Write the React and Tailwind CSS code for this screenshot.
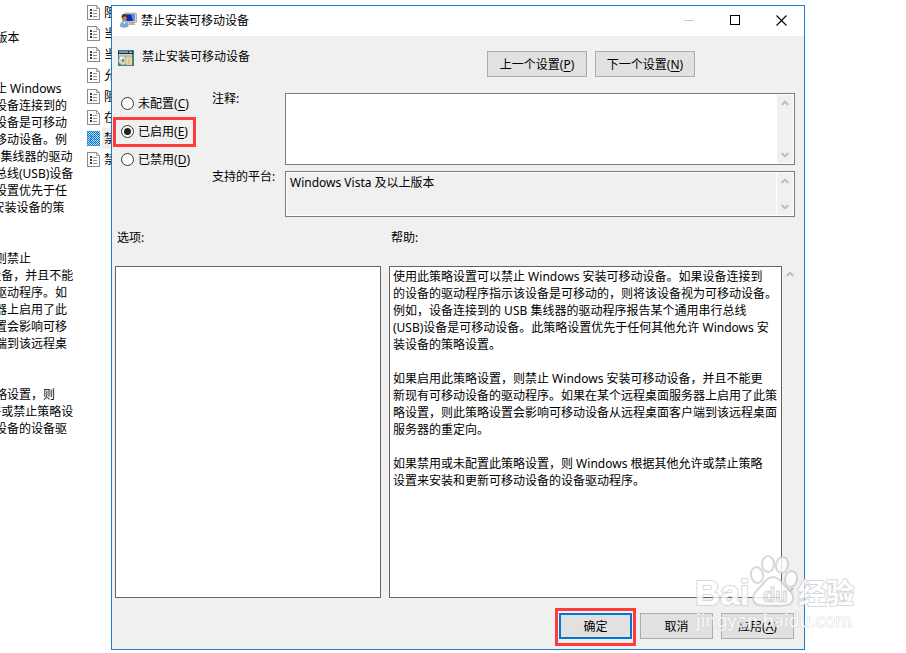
import { useState } from "react";

const POLICY_SUMMARY = [
  "使用此策略设置可以禁止 Windows",
  "安装可移动设备。如果设备连接到的",
  "设备的驱动程序指示该设备是可移动",
  "的，则将该设备视为可移动设备。例",
  "如，设备连接到的 USB 集线器的驱动",
  "程序报告某个通用串行总线(USB)设备",
  "是可移动设备。此策略设置优先于任",
  "何其他允许 Windows 安装设备的策",
  "略设置。",
  "",
  "如果启用此策略设置，则禁止",
  "Windows 安装可移动设备，并且不能",
  "更新现有可移动设备的驱动程序。如",
  "果在某个远程桌面服务器上启用了此",
  "策略设置，则此策略设置会影响可移",
  "动设备从远程桌面客户端到该远程桌",
  "面服务器的重定向。",
  "",
  "如果禁用或未配置此策略设置，则",
  "Windows 根据其他允许或禁止策略设",
  "置来安装和更新可移动设备的设备驱",
];

const POLICIES = ["阻", "当", "当", "允", "阻", "在", "禁", "禁"];
const SELECTED_POLICY = 6;

const HELP_TEXT = `使用此策略设置可以禁止 Windows 安装可移动设备。如果设备连接到
的设备的驱动程序指示该设备是可移动的，则将该设备视为可移动设备。
例如，设备连接到的 USB 集线器的驱动程序报告某个通用串行总线
(USB)设备是可移动设备。此策略设置优先于任何其他允许 Windows 安
装设备的策略设置。

如果启用此策略设置，则禁止 Windows 安装可移动设备，并且不能更
新现有可移动设备的驱动程序。如果在某个远程桌面服务器上启用了此策
略设置，则此策略设置会影响可移动设备从远程桌面客户端到该远程桌面
服务器的重定向。

如果禁用或未配置此策略设置，则 Windows 根据其他允许或禁止策略
设置来安装和更新可移动设备的设备驱动程序。`;

const STATES = [
  { id: "unset", label: "未配置", hotkey: "C" },
  { id: "enabled", label: "已启用", hotkey: "E" },
  { id: "disabled", label: "已禁用", hotkey: "D" },
];

const Mnemonic = ({ text, hotkey }) => (
  <span>
    {text}(<u className="underline-offset-2">{hotkey}</u>)
  </span>
);

const PolicyIcon = ({ selected }) => (
  <svg width="13" height="15" viewBox="0 0 13 15" shapeRendering="crispEdges" className="shrink-0">
    <defs>
      <pattern id="dither" width="2" height="2" patternUnits="userSpaceOnUse">
        <rect width="1" height="1" fill="#0078d7" />
        <rect x="1" y="1" width="1" height="1" fill="#0078d7" />
      </pattern>
    </defs>
    <path d="M.5 .5h9l3 3v11h-12z" fill="#fbfbfb" stroke="#8c8c8c" />
    <path d="M9.5 .5v3h3" fill="none" stroke="#a8a8a8" />
    <path d="M3 4h2v2H3zM3 7h2v2H3zM3 10h2v2H3z" fill="#3c3c48" />
    <path d="M6 5.500h4M6 8.500h4M6 11.500h4" stroke="#8f8f9c" />
    {selected && <rect width="13" height="15" fill="#9fd0f7" fillOpacity="0.6" />}
    {selected && <rect width="13" height="15" fill="url(#dither)" />}
  </svg>
);

const UserMonitorIcon = () => (
  <svg width="17" height="16" viewBox="0 0 17 16" className="shrink-0">
    <rect x="4.5" y="1" width="12" height="9.5" rx="1" fill="#d9d6c8" stroke="#96948a" strokeWidth=".7" />
    <rect x="6" y="2.3" width="9" height="6.8" fill="#1226b4" />
    <path d="M11 2.3h4v6.8h-2z" fill="#5c8dec" />
    <path d="M9 10.5h5l1.5 2.5H8z" fill="#b5b2a6" />
    <path d="M0 14.5c0-4 2-5.5 4-5.5s4.500 1.500 4.500 5.500c-2 1.500-6.500 1.500-8.500 0z" fill="#75a9d8" />
    <path d="M3 9.500l1.300 3 1.500-3z" fill="#f1f5f8" />
    <ellipse cx="4.300" cy="6.300" rx="2.500" ry="3.200" fill="#b98458" />
    <path d="M1.700 6C1 2.500 3 1.500 4.800 2c2 .2 2.500 2 2 4L5.500 4z" fill="#463424" />
  </svg>
);

const SettingIcon = () => (
  <svg width="16" height="16" viewBox="0 0 16 16" className="shrink-0">
    <rect width="16" height="16" fill="#3f7f7b" />
    <rect y="1" width="15" height="3" fill="#17335f" />
    <path d="M1 2h9" stroke="#e9edf2" />
    <rect x="11" y="1.500" width="3" height="1.500" fill="#b8c0ce" />
    <rect x="1" y="4" width="13" height="3" fill="#c6cbc9" />
    <path d="M8 5h5v1H8z" fill="#edc33b" />
    <circle cx="5" cy="10.500" r="4.500" fill="#d5dbd2" stroke="#8d9690" strokeWidth=".6" />
    <path d="M5 10.500L1.500 8A4.500 4.500 0 0 1 4 6.300z" fill="#fff" />
    <circle cx="5" cy="10.500" r="1.200" fill="#4b7068" />
    <path d="M8 7h6v8H8z" fill="#fdf6ce" stroke="#b59a4c" strokeWidth=".7" />
    <path d="M9.500 9h3M9.500 11h3M9.500 13h3" stroke="#927b40" strokeWidth=".8" />
  </svg>
);

const Chevron = ({ down }) => (
  <svg width="8" height="6" viewBox="0 0 8 6" fill="none" stroke="#bfbfbf" strokeWidth="2">
    <path d={down ? "M.7 1L4 4.300 7.300 1" : "M.7 5L4 1.700 7.300 5"} />
  </svg>
);

const ScrollTrack = () => (
  <div className="w-4 shrink-0 flex flex-col items-center justify-between bg-[#f0f0f0] py-[5px]">
    <Chevron />
    <Chevron down />
  </div>
);

const PushButton = ({ className = "", children }) => (
  <button
    type="button"
    className={`h-[26px] flex items-center justify-center bg-[#e1e1e1] border border-[#adadad] ${className}`}
  >
    {children}
  </button>
);

const TitleBar = ({ title }) => (
  <div className="h-[30px] shrink-0 flex items-center bg-white pl-2 pb-0.5">
    <UserMonitorIcon />
    <h1 className="ml-1 flex-1">{title}</h1>
    <button type="button" aria-label="最小化" disabled className="w-[46px] h-full flex items-center justify-center">
      <svg width="10" height="10" stroke="#c8c8c8" shapeRendering="crispEdges">
        <path d="M0 5.500h10" />
      </svg>
    </button>
    <button type="button" aria-label="最大化" className="w-[46px] h-full flex items-center justify-center">
      <svg width="10" height="10" fill="none" stroke="#000" shapeRendering="crispEdges">
        <path d="M.5 .5h9v9h-9z" />
      </svg>
    </button>
    <button type="button" aria-label="关闭" className="w-[46px] h-full flex items-center justify-center">
      <svg width="11" height="11" fill="none" stroke="#000" strokeWidth="1.100">
        <path d="M.5 .5l10 10M10.500 .5l-10 10" />
      </svg>
    </button>
  </div>
);

const StateOptions = () => {
  const [state, setState] = useState("enabled");

  return (
    <fieldset className="w-[97px] shrink-0">
      {STATES.map(({ id, label, hotkey }) => (
        <label key={id} className="relative h-7 flex items-center gap-1 pl-[6px]">
          <input
            type="radio"
            name="state"
            checked={state === id}
            onChange={() => setState(id)}
            className="appearance-none size-[13px] grid place-items-center rounded-full border border-[#333] bg-white before:size-[7px] before:rounded-full checked:before:bg-[#222]"
          />
          <Mnemonic text={label} hotkey={hotkey} />
          {id === "enabled" && (
            <span className="absolute -left-0.5 top-0 w-[83px] h-[30px] border-3 border-[#ff3b3b] pointer-events-none" />
          )}
        </label>
      ))}
    </fieldset>
  );
};

const Watermark = () => (
  <div className="absolute left-[695px] top-[554px] pointer-events-none select-none opacity-80" aria-hidden="true">
    <svg width="166" height="80" viewBox="0 0 166 80" fill="#fff" stroke="#cfcfcf">
      <g strokeWidth="2">
        <text x="0" y="51" fontFamily="'Liberation Sans', sans-serif" fontSize="35" fontWeight="700" paintOrder="stroke">Bai</text>
        <ellipse cx="62" cy="21" rx="6" ry="8" transform="rotate(-12 62 21)" />
        <ellipse cx="73" cy="10" rx="6" ry="8" />
        <ellipse cx="87" cy="11" rx="6" ry="8" transform="rotate(12 87 11)" />
        <ellipse cx="96" cy="25" rx="6" ry="8" transform="rotate(12 96 25)" />
        <path d="M78 23c6 0 8 5 12 9 5 5 9 8 8 13-1 7-8 7-20 7s-19 0-20-7c-1-5 4-8 8-13 4-4 6-9 12-9z" />
      </g>
      <text x="68" y="48" fontFamily="'Liberation Sans', sans-serif" fontSize="20" fontWeight="700" fill="#f4f4f4" strokeWidth="1">du</text>
      <text x="103" y="50" fontFamily="'Noto Sans CJK SC', sans-serif" fontSize="28" fontWeight="700" strokeWidth="2" paintOrder="stroke">经验</text>
      <text x="1" y="73" fontFamily="'Noto Sans', sans-serif" fontSize="18" strokeWidth="1" paintOrder="stroke">jingyan.baidu.com</text>
    </svg>
  </div>
);

const PolicyDialog = () => (
  <section className="absolute left-[111px] right-[101px] top-[5px] bottom-[3px] flex flex-col border border-[#1a7fd4] bg-[#f0f0f0]">
    <TitleBar title="禁止安装可移动设备" />

    <div className="flex-1 flex flex-col pl-[3px] pb-[10px]">
      <header className="h-[53px] flex items-start pl-[3px] pt-[14px] pr-[109px]">
        <SettingIcon />
        <h2 className="ml-2 -mt-0.5 flex-1">禁止安装可移动设备</h2>
        <div className="flex gap-2 pt-px">
          <PushButton className="w-[100px]">
            <Mnemonic text="上一个设置" hotkey="P" />
          </PushButton>
          <PushButton className="w-[100px]">
            <Mnemonic text="下一个设置" hotkey="N" />
          </PushButton>
        </div>
      </header>

      <div className="flex pr-[9px]">
        <StateOptions />
        <div className="flex-1 flex flex-col gap-[3px] pt-px">
          <div className="flex">
            <label htmlFor="comment" className="w-[73px] shrink-0">注释:</label>
            <div className="flex-1 h-[72px] mt-[3px] flex border border-[#7a7a7a] bg-white p-px">
              <textarea id="comment" className="flex-1 resize-none overflow-hidden px-[3px] outline-none" />
              <ScrollTrack />
            </div>
          </div>
          <div className="flex">
            <label htmlFor="platform" className="w-[73px] shrink-0">支持的平台:</label>
            <div className="flex-1 h-[46px] mt-[3px] flex gap-px border border-[#7a7a7a] bg-white p-px">
              <textarea
                id="platform"
                readOnly
                value="Windows Vista 及以上版本"
                className="flex-1 resize-none overflow-hidden bg-[#f0f0f0] px-[3px] pt-px outline-none"
              />
              <ScrollTrack />
            </div>
          </div>
        </div>
      </div>

      <div className="flex-1 flex gap-2 mt-3 pr-[6px]">
        <div className="w-[266px] flex flex-col">
          <h3 className="pl-0.5">选项:</h3>
          <div className="flex-1 mt-5 border border-[#646464] bg-white" />
        </div>
        <div className="flex-1 flex flex-col">
          <h3 className="pl-0.5">帮助:</h3>
          <div className="flex-1 flex mt-5">
            <p className="flex-1 whitespace-pre border border-[#646464] bg-white px-[3px] pt-px">{HELP_TEXT}</p>
            <ScrollTrack />
          </div>
        </div>
      </div>

      <footer className="flex justify-end gap-2 mt-[15px] pr-[10px]">
        <div className="relative">
          <PushButton className="w-[73px] outline-2 -outline-offset-2 outline-[#0078d7]">确定</PushButton>
          <span className="absolute -inset-x-1 -top-[5px] -bottom-[7px] border-3 border-[#ff3b3b] pointer-events-none" />
        </div>
        <PushButton className="w-[73px]">取消</PushButton>
        <PushButton className="w-[73px]">
          <Mnemonic text="应用" hotkey="A" />
        </PushButton>
      </footer>
    </div>
  </section>
);

export default function App() {
  return (
    <main className="relative min-h-screen overflow-hidden flex items-start bg-white text-black text-[12px] leading-[17px] font-['Noto_Sans','Noto_Sans_CJK_SC',sans-serif]">
      {/* extended pane, scrolled to the right under the window edge */}
      <aside className="w-[212px] -ml-[125px] shrink-0 whitespace-pre pt-[29px]">
        <p>Windows Vista 及以上版本</p>
        <div className="mt-[34px]">
          {POLICY_SUMMARY.map((line, i) => (
            <p key={i} className="h-[17px]">{line}</p>
          ))}
        </div>
      </aside>

      <ul className="pt-[2px]">
        {POLICIES.map((name, i) => (
          <li key={i} className="h-[21px] flex items-center gap-0.5">
            <PolicyIcon selected={i === SELECTED_POLICY} />
            <span className={`h-[21px] flex items-center px-0.5 ${i === SELECTED_POLICY ? "bg-[#ededed]" : ""}`}>
              {name}
            </span>
          </li>
        ))}
      </ul>

      <PolicyDialog />
      <Watermark />
    </main>
  );
}
